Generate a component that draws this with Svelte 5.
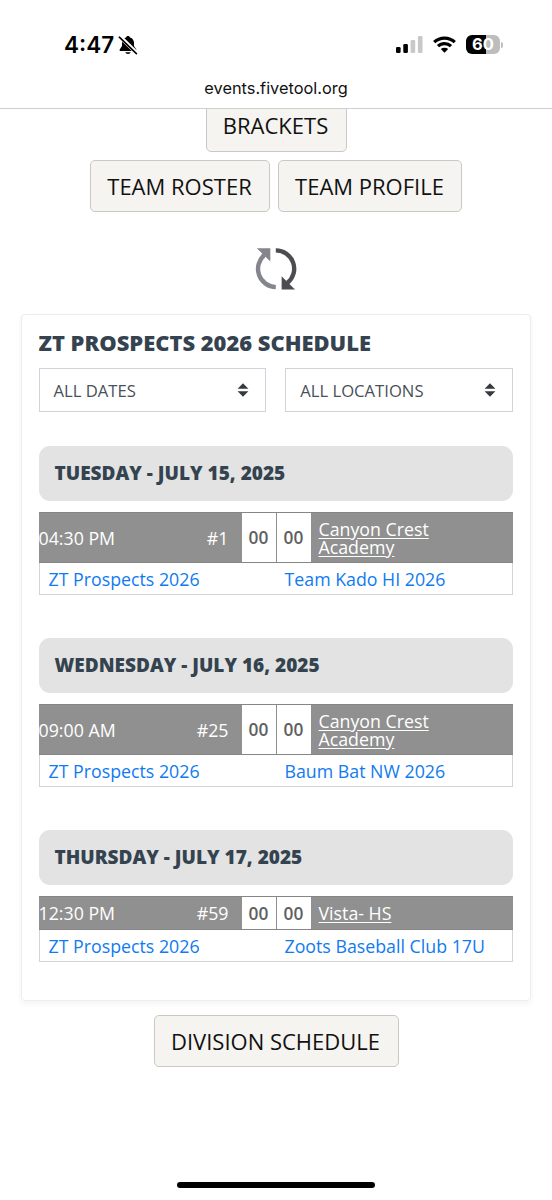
<script>
  const days = [
    { date: 'TUESDAY - JULY 15, 2025', time: '04:30 PM', number: '#1', venue: 'Canyon Crest Academy', home: 'ZT Prospects 2026', away: 'Team Kado HI 2026' },
    { date: 'WEDNESDAY - JULY 16, 2025', time: '09:00 AM', number: '#25', venue: 'Canyon Crest Academy', home: 'ZT Prospects 2026', away: 'Baum Bat NW 2026' },
    { date: 'THURSDAY - JULY 17, 2025', time: '12:30 PM', number: '#59', venue: 'Vista- HS', home: 'ZT Prospects 2026', away: 'Zoots Baseball Club 17U' }
  ];
  const filters = ['ALL DATES', 'ALL LOCATIONS'];
</script>

<div class="screen">
  <header>
    <div class="status">
      <div class="clock">
        <span>4:47</span>
        <svg width="20" height="20" viewBox="0 0 20 20">
          <path d="M10 1c-1 0-1.700.6-2 1.400C5.200 3.200 4 5.400 4 8v3L1.700 14.400V16h16.600v-1.600L16 11V8c0-2.600-1.200-4.800-4-5.600C11.700 1.600 11 1 10 1ZM7.200 17.200a2.900 2.300 0 0 0 5.600 0Z" />
          <path d="M1.800 1.500 18.800 18" stroke="#fff" stroke-width="4" />
          <path d="M1.300 2.200 18.400 18.700" stroke="#000" stroke-width="1.600" stroke-linecap="round" />
        </svg>
      </div>
      <div class="indicators">
        <svg width="27" height="18" viewBox="0 0 27 18">
          <rect x="0" y="11" width="4.600" height="6" rx="1.300" />
          <rect x="7.300" y="8" width="4.600" height="9" rx="1.300" />
          <rect x="14.600" y="4" width="4.600" height="13" rx="1.300" fill="#c8c8c8" />
          <rect x="21.900" y="0" width="4.600" height="17" rx="1.300" fill="#c8c8c8" />
        </svg>
        <svg class="wifi" width="23" height="17" viewBox="0 0 23 17">
          <g fill="none" stroke="#000" stroke-width="3.200">
            <path d="M1.200 6.200a14.800 14.800 0 0 1 20.600 0" />
            <path d="M5 10.200a9.300 9.300 0 0 1 13 0" />
          </g>
          <path d="M7.800 13.100a5.400 5.400 0 0 1 7.400 0L11.500 16.700Z" />
        </svg>
        <div class="battery"><span>60</span></div>
        <i class="cap"></i>
      </div>
    </div>
    <div class="url">events.fivetool.org</div>
  </header>

  <main>
    <nav>
      <div class="row"><button class="brackets">BRACKETS</button></div>
      <div class="row"><button class="roster">TEAM ROSTER</button><button class="profile">TEAM PROFILE</button></div>
    </nav>

    <svg class="refresh" width="42" height="42" viewBox="0 0 42 42">
      <path d="M20.800 39.100A18.300 18.300 0 0 1 9.300 7" fill="none" stroke="#85868d" stroke-width="4.400" />
      <path d="M1.800.2H15.300V13.500Z" fill="#85868d" />
      <path d="M20.800 2.400A18.300 18.300 0 0 1 32.300 35" fill="none" stroke="#4d4c50" stroke-width="4.400" />
      <path d="M26.600 28.200V41.500H40Z" fill="#4d4c50" />
    </svg>

    <section class="card">
      <h1>ZT PROSPECTS 2026 SCHEDULE</h1>
      <div class="filters">
        {#each filters as label}
          <div class="select">
            <span>{label}</span>
            <svg width="12" height="14" viewBox="0 0 12 14"><path d="M.6 5.800 6 .2l5.400 5.600ZM.6 8.200 6 13.800l5.400-5.600Z" fill="#343a40" /></svg>
          </div>
        {/each}
      </div>
      {#each days as day}
        <article>
          <h2><span>{day.date}</span></h2>
          <div class="game">
            <div class="info" class:short={day.venue === 'Vista- HS'}>
              <span class="time">{day.time}</span>
              <span class="number">{day.number}</span>
              <span class="score">00</span>
              <span class="score">00</span>
              <a class="venue" href="#venue">{day.venue}</a>
            </div>
            <div class="teams"><a href="#home">{day.home}</a><a href="#away">{day.away}</a></div>
          </div>
        </article>
      {/each}
    </section>

    <button class="division">DIVISION SCHEDULE</button>
  </main>
  <footer><i></i></footer>
</div>

<style>
  :global(body) { background: #fff; }
  .screen, .screen * { box-sizing: border-box; }
  .screen {
    width: 552px;
    height: 1200px;
    display: flex;
    flex-direction: column;
    overflow: hidden;
    background: #fff;
    font-family: "Open Sans", sans-serif;
  }
  header { height: 109px; flex: none; border-bottom: 1px solid #cfcfcf; font-family: Inter, sans-serif; }
  .status { height: 76px; padding: 32px 49px 0 64px; display: flex; justify-content: space-between; }
  .clock { display: flex; height: 25px; align-items: center; gap: 4px; }
  .clock span { font-size: 22.500px; font-weight: 600; width: 50px; white-space: nowrap; }
  .indicators { display: flex; height: 25px; align-items: center; }
  .wifi { margin-left: 10px; }
  .battery {
    width: 34px;
    height: 19px;
    margin-left: 10px;
    border-radius: 6px;
    background: linear-gradient(90deg, #000 60%, #bdbdbd 60%);
    color: #fff;
    font-size: 16.500px;
    font-weight: 700;
    line-height: 19px;
    text-align: center;
  }
  .cap { width: 2px; height: 6px; margin-left: 1px; border-radius: 0 2px 2px 0; background: #bdbdbd; }
  .url { text-align: center; font-size: 16.350px; line-height: 24px; color: #111; }
  main { flex: 1; display: flex; flex-direction: column; align-items: center; overflow: hidden; }
  nav { margin-top: -9px; display: flex; flex-direction: column; gap: 8px; flex: none; }
  .row { display: flex; justify-content: center; gap: 8px; }
  button {
    height: 52px;
    flex: none;
    padding: 0 1px 0 0;
    border: 1.500px solid #cbc7c4;
    border-radius: 5px;
    background: #f6f4f0;
    color: #111;
    font-family: "Open Sans", sans-serif;
    font-size: 22px;
    white-space: nowrap;
  }
  .brackets { width: 141px; padding-bottom: 2px; }
  .roster { width: 180px; }
  .profile { width: 184px; }
  .refresh { margin-top: 36px; flex: none; }
  .card {
    width: 510px;
    height: 687px;
    flex: none;
    margin-top: 24px;
    padding: 15px 17px 0 16.500px;
    border: 1px solid #ededed;
    border-radius: 4px;
    box-shadow: 0 3px 6px rgba(60, 20, 20, .05);
  }
  h1, h2 { margin: 0; color: #34434f; font-weight: 800; white-space: nowrap; }
  h1 { height: 25px; font-size: 21.930px; line-height: 25px; }
  .filters { display: flex; gap: 19px; margin-top: 13px; }
  .select {
    flex: 1;
    height: 44px;
    padding: 0 16px 0 14px;
    border: 1.500px solid #ced4da;
    display: flex;
    align-items: center;
    justify-content: space-between;
    font-size: 16.650px;
    color: #495057;
    font-weight: 500;
  }
  article { margin-top: 43px; }
  .filters + article { margin-top: 34px; }
  h2 { height: 55px; padding-left: 16px; border-radius: 11px; background: #e3e3e3; font-size: 19.030px; line-height: 55px; }
  .game { margin-top: 11px; border: 1px solid #d4d4d4; border-top: 0; font-size: 17.780px; }
  .info { height: 51px; margin: 0 -1px; display: flex; align-items: stretch; background: #909090; border: 1px solid #858585; border-width: 1px 0; color: #fff; line-height: 50px; }
  .info.short { height: 34px; line-height: 33px; }
  .time { width: 100px; }
  .number { width: 90px; text-align: right; margin-right: 13px; }
  .score { width: 34px; margin-right: 1px; background: #fff; color: #606060; text-align: center; font-weight: 600; font-size: 17.300px; }
  .venue { width: 140px; margin-left: 7px; align-self: center; color: #fff; line-height: 18px; text-underline-offset: 2px; }
  .short .venue { margin-top: -1px; }
  .teams { display: grid; grid-template-columns: 236px 1fr; padding-left: 9px; height: 31px; line-height: 32px; }
  .teams a { color: #107bf0; text-decoration: none; white-space: nowrap; }
  .division { width: 245px; margin-top: 14px; }
  footer { height: 18px; flex: none; display: flex; justify-content: center; align-items: flex-start; }
  footer i { width: 198px; height: 6px; border-radius: 3px; background: #000; }
</style>
